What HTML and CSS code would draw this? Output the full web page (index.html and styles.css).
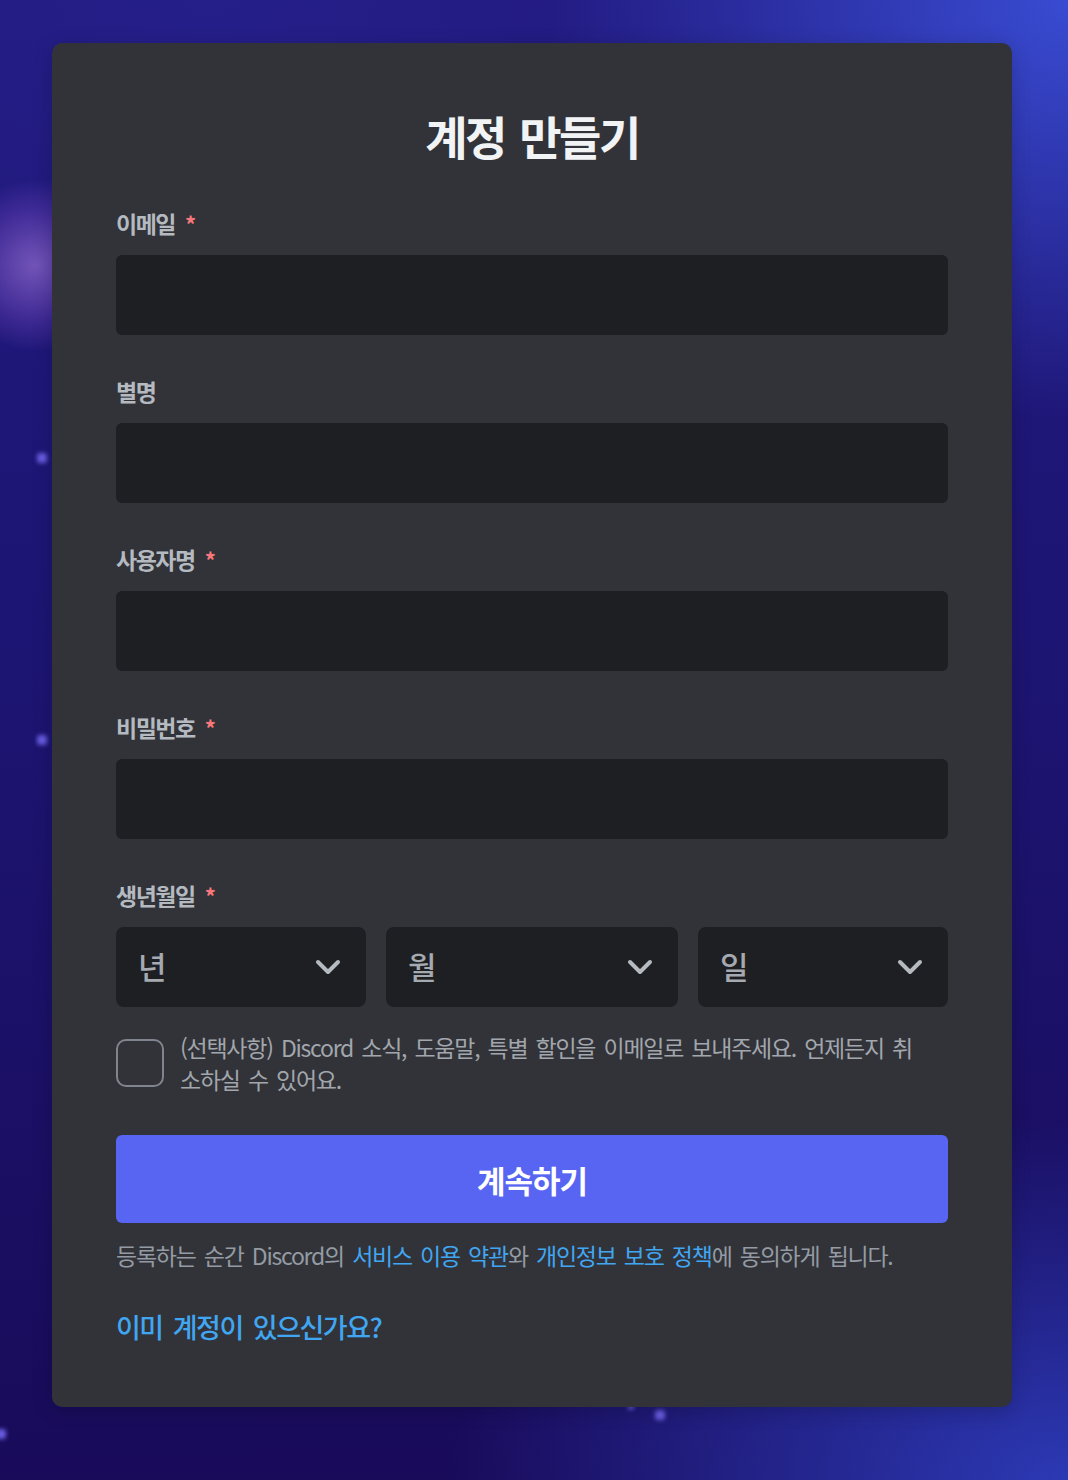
FILE: index.html
```html
<!DOCTYPE html>
<html lang="ko">
<head>
    <meta charset="UTF-8" />
    <title>계정 만들기</title>
    <link rel="stylesheet" href="styles.css">
</head>
<body>
    <div class="glow"></div>
    <div class="dot dot-1"></div>
    <div class="dot dot-2"></div>
    <div class="dot dot-3"></div>
    <div class="dot dot-4"></div>
    <div class="dot dot-5"></div>

    <main class="card">
        <h1 class="title">계정 만들기</h1>

        <form class="form">
            <div class="field">
                <label class="label" for="email">이메일<span class="required">*</span></label>
                <input class="input" id="email" type="email" />
            </div>

            <div class="field">
                <label class="label" for="nick">별명</label>
                <input class="input" id="nick" type="text" />
            </div>

            <div class="field">
                <label class="label" for="username">사용자명<span class="required">*</span></label>
                <input class="input" id="username" type="text" />
            </div>

            <div class="field">
                <label class="label" for="password">비밀번호<span class="required">*</span></label>
                <input class="input" id="password" type="password" />
            </div>

            <div class="field">
                <div class="label">생년월일<span class="required">*</span></div>
                <div class="selects">
                    <div class="select select-year">
                        <span>년</span>
                        <svg width="32" height="32" viewBox="0 0 32 32"><path d="M6 11 L16 21 L26 11" /></svg>
                    </div>
                    <div class="select select-month">
                        <span>월</span>
                        <svg width="32" height="32" viewBox="0 0 32 32"><path d="M6 11 L16 21 L26 11" /></svg>
                    </div>
                    <div class="select select-day">
                        <span>일</span>
                        <svg width="32" height="32" viewBox="0 0 32 32"><path d="M6 11 L16 21 L26 11" /></svg>
                    </div>
                </div>
            </div>

            <label class="checkbox-row">
                <span class="checkbox"></span>
                <span class="checkbox-text">(선택사항) Discord 소식, 도움말, 특별 할인을 이메일로 보내주세요. 언제든지 취소하실 수 있어요.</span>
            </label>

            <button class="submit" type="button">계속하기</button>

            <p class="terms">등록하는 순간 Discord의 <a href="#">서비스 이용 약관</a>와 <a href="#">개인정보 보호 정책</a>에 동의하게 됩니다.</p>

            <a class="login-link" href="#">이미 계정이 있으신가요?</a>
        </form>
    </main>
</body>
</html>
```

FILE: styles.css
```css
html, body {
    margin: 0;
    padding: 0;
}

body {
    position: relative;
    min-height: 1480px;
    overflow: hidden;
    font-family: "Noto Sans CJK KR", "Noto Sans", sans-serif;
    background-color: #1c1268;
    background-image:
        radial-gradient(ellipse 520px 420px at 100% 0%, rgba(58, 78, 214, 0.95), transparent),
        radial-gradient(ellipse 620px 360px at 100% 100%, rgba(46, 62, 190, 0.9), transparent),
        radial-gradient(ellipse 520px 300px at 20% 0%, rgba(38, 32, 140, 0.8), transparent),
        linear-gradient(180deg, #221a80 0%, #1c1470 50%, #190b5a 100%);
}

.glow {
    position: absolute;
    left: -50px;
    top: 180px;
    width: 170px;
    height: 170px;
    border-radius: 50%;
    background: radial-gradient(circle, rgba(150, 110, 210, 0.7) 0%, rgba(110, 70, 190, 0.4) 45%, transparent 72%);
}

.dot {
    position: absolute;
    width: 10px;
    height: 10px;
    border-radius: 3px;
    background: #6a5ce0;
    filter: blur(2px);
}

.dot-1 { left: 37px; top: 453px; }
.dot-2 { left: 37px; top: 735px; }
.dot-3 { left: 655px; top: 1410px; }
.dot-4 { left: 628px; top: 1404px; width: 6px; height: 6px; }
.dot-5 { left: -4px; top: 1429px; }

.card {
    position: relative;
    box-sizing: border-box;
    width: 960px;
    margin: 43px 0 0 52px;
    padding: 64px;
    background: #313338;
    border-radius: 10px;
    box-shadow: 0 4px 20px rgba(0, 0, 0, 0.2);
}

.title {
    margin: 0;
    height: 60px;
    line-height: 56px;
    text-align: center;
    font-size: 46px;
    font-weight: 700;
    letter-spacing: -2.5px;
    word-spacing: 4px;
    color: #f2f3f5;
}

.form {
    display: flex;
    flex-direction: column;
}

.field {
    margin-top: 40px;
}

.label {
    display: block;
    height: 32px;
    line-height: 32px;
    margin-bottom: 16px;
    font-size: 23px;
    font-weight: 700;
    letter-spacing: -1.5px;
    color: #b5bac1;
}

.required {
    padding-left: 10px;
    font-size: 22px;
    color: #fa777c;
    letter-spacing: 0;
}

.input {
    display: block;
    box-sizing: border-box;
    width: 100%;
    height: 80px;
    padding: 0 20px;
    border: none;
    border-radius: 6px;
    background: #1e1f22;
    color: #dbdee1;
    font-size: 32px;
    outline: none;
}

.selects {
    display: grid;
    grid-template-columns: 250px 1fr 250px;
    gap: 20px;
}

.select {
    display: flex;
    align-items: center;
    justify-content: space-between;
    box-sizing: border-box;
    height: 80px;
    padding: 0 24px 0 22px;
    border-radius: 8px;
    background: #1e1f22;
    color: #a5a9b0;
    font-size: 31px;
    font-weight: 500;
}

.select span {
    margin-top: -3px;
}

.select svg path {
    fill: none;
    stroke: #b5bac1;
    stroke-width: 4;
    stroke-linecap: round;
    stroke-linejoin: round;
}

.select svg {
    margin-right: -2px;
}

.checkbox-row {
    display: flex;
    align-items: center;
    gap: 16px;
    margin-top: 24px;
}

.checkbox {
    flex: none;
    box-sizing: border-box;
    width: 48px;
    height: 48px;
    border: 2px solid #80848e;
    border-radius: 10px;
}

.checkbox-text {
    max-width: 750px;
    line-height: 32px;
    font-size: 23px;
    letter-spacing: -1.25px;
    word-spacing: 3px;
    color: #a2a6ad;
}

.submit {
    margin-top: 40px;
    height: 88px;
    border: none;
    border-radius: 6px;
    background: #5865f2;
    color: #fff;
    font-family: inherit;
    font-size: 31px;
    font-weight: 700;
    letter-spacing: -1px;
    cursor: pointer;
}

.terms {
    margin: 16px 0 0;
    line-height: 32px;
    font-size: 23px;
    letter-spacing: -1.25px;
    word-spacing: 3px;
    color: #949ba4;
}

.terms a,
.login-link {
    color: #41a6f2;
    text-decoration: none;
}

.login-link {
    align-self: flex-start;
    margin-top: 40px;
    line-height: 32px;
    font-size: 27px;
    font-weight: 500;
    letter-spacing: -1.5px;
    word-spacing: 4px;
}
```
